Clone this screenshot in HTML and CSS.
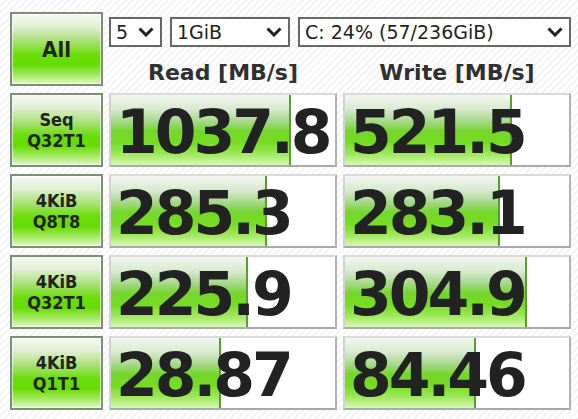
FILE: index.html
```html
<!DOCTYPE html>
<html>
<head>
<meta charset="utf-8">
<link rel="stylesheet" href="styles.css">
</head>
<body>
<div class="app">
  <div class="btn btn-all">All</div>
  <div class="top">
    <div class="selects">
      <div class="sel sel-n">5<span class="chev"><svg width="16" height="10" viewBox="0 0 16 10"><path d="M1.5 1.5 L8 8 L14.5 1.5" fill="none" stroke="#222" stroke-width="3"/></svg></span></div>
      <div class="sel sel-size">1GiB<span class="chev"><svg width="16" height="10" viewBox="0 0 16 10"><path d="M1.5 1.5 L8 8 L14.5 1.5" fill="none" stroke="#222" stroke-width="3"/></svg></span></div>
      <div class="sel sel-drive">C: 24% (57/236GiB)<span class="chev"><svg width="16" height="10" viewBox="0 0 16 10"><path d="M1.5 1.5 L8 8 L14.5 1.5" fill="none" stroke="#222" stroke-width="3"/></svg></span></div>
    </div>
    <div class="heads">
      <div class="head">Read [MB/s]</div>
      <div class="head">Write [MB/s]</div>
    </div>
  </div>

  <div class="btn btn-test">Seq<br>Q32T1</div>
  <div class="cell"><div class="bar" style="width:178px"></div><span class="val">1037.8</span></div>
  <div class="cell"><div class="bar" style="width:165px"></div><span class="val">521.5</span></div>

  <div class="btn btn-test">4KiB<br>Q8T8</div>
  <div class="cell"><div class="bar" style="width:154px"></div><span class="val">285.3</span></div>
  <div class="cell"><div class="bar" style="width:153px"></div><span class="val">283.1</span></div>

  <div class="btn btn-test">4KiB<br>Q32T1</div>
  <div class="cell"><div class="bar" style="width:135px"></div><span class="val">225.9</span></div>
  <div class="cell"><div class="bar" style="width:180px"></div><span class="val">304.9</span></div>

  <div class="btn btn-test">4KiB<br>Q1T1</div>
  <div class="cell"><div class="bar" style="width:108px"></div><span class="val">28.87</span></div>
  <div class="cell"><div class="bar" style="width:129px"></div><span class="val">84.46</span></div>
</div>
</body>
</html>
```

FILE: styles.css
```css
html, body {
  margin: 0;
  padding: 0;
}
body {
  width: 578px;
  height: 419px;
  overflow: hidden;
  background: repeating-linear-gradient(135deg, #ffffff 0 3px, #f4f4f4 3px 5px);
  font-family: "DejaVu Sans", sans-serif;
  color: #222;
}
.app {
  display: grid;
  grid-template-columns: 93px 228px 228px;
  grid-template-rows: 74px 74px 74px 74px 74px;
  column-gap: 6px;
  row-gap: 7px;
  padding: 12px 0 0 10px;
}
.btn {
  box-sizing: border-box;
  border: 2px solid #7c8d78;
  background: linear-gradient(to bottom, #f6f9f4 0%, #dff0d4 18%, #a6e070 40%, #6ade0a 58%, #64dc00 72%, #a8ea68 88%, #e0f8c8 100%);
  box-shadow: inset 0 0 0 1px rgba(255,255,255,0.6);
  display: flex;
  align-items: center;
  justify-content: center;
  text-align: center;
  font-family: "DejaVu Sans Condensed", "DejaVu Sans", sans-serif;
  font-stretch: condensed;
  font-weight: bold;
  color: #222;
}
.btn-all {
  font-size: 22px;
}
.btn-test {
  font-size: 18px;
  line-height: 21px;
}
.top {
  grid-column: 2 / 4;
  display: flex;
  flex-direction: column;
}
.selects {
  display: flex;
  gap: 8px;
  margin-top: 5px;
  height: 30px;
}
.sel {
  box-sizing: border-box;
  height: 30px;
  border: 2px solid #676767;
  background: #fff;
  display: flex;
  align-items: center;
  justify-content: space-between;
  padding: 0 6px 0 5px;
  font-size: 19px;
  color: #222;
}
.sel-n { width: 53px; }
.sel-size { width: 120px; }
.sel-drive { width: 273px; }
.chev {
  display: flex;
  align-items: center;
}
.heads {
  display: grid;
  grid-template-columns: 228px 228px;
  column-gap: 6px;
  margin-top: 13px;
}
.head {
  text-align: center;
  font-size: 22px;
  line-height: 26px;
  font-weight: bold;
  color: #303030;
}
.cell {
  position: relative;
  box-sizing: border-box;
  border: 2px solid;
  border-color: #dadada #b2b2b2 #a9a9a9 #d2d2d2;
  background: #fff;
  overflow: hidden;
  display: flex;
  align-items: center;
  padding-left: 5px;
}
.bar {
  position: absolute;
  left: 0;
  top: 0;
  bottom: 0;
  background: linear-gradient(to bottom, #f2f6f0 0%, #d8ead0 20%, #a4d888 38%, #74d62c 52%, #76dc22 68%, #9ce85a 84%, #d6f8b4 100%);
  border-right: 2px solid #5a9c34;
}
.val {
  position: relative;
  font-family: "DejaVu Sans", sans-serif;
  font-weight: bold;
  font-size: 60px;
  letter-spacing: -3px;
  line-height: 70px;
  margin-top: 4px;
  color: #222;
  white-space: nowrap;
}
```
